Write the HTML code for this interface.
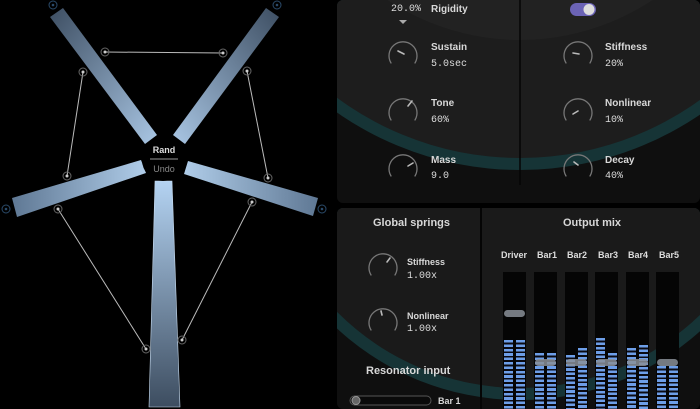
<!DOCTYPE html>
<html><head><style>
*{margin:0;padding:0;box-sizing:border-box}
body{width:700px;height:409px;background:#000;overflow:hidden;position:relative;font-family:"Liberation Sans",sans-serif;color:#ddd}
.abs{position:absolute}
.lbl{position:absolute;font-size:10px;font-weight:bold;color:#d8d8d8}
.val{position:absolute;font-family:"Liberation Mono",monospace;font-size:10px;color:#ddd}
.meter{position:absolute;top:272px;width:23px;height:137px;background:#050505}
.lv{position:absolute;bottom:0;width:9px;background:repeating-linear-gradient(to bottom,#6d9ee8 0 2.6px,#0a0a12 2.6px 4.4px)}
.hd{position:absolute;left:1px;width:21px;height:7px;border-radius:4px;background:#8a8f98;opacity:.85}
.cl{position:absolute;top:250px;font-size:9px;font-weight:bold;color:#ddd}
</style></head><body>
<svg class="abs" style="left:0;top:0" width="700" height="409">
<defs>
<linearGradient id="g1" x1="0" y1="0" x2="1" y2="1"><stop offset="0" stop-color="#3d4e62"/><stop offset="1" stop-color="#a9c6e4"/></linearGradient>
<linearGradient id="g2" x1="1" y1="0" x2="0" y2="1"><stop offset="0" stop-color="#3d4e62"/><stop offset="1" stop-color="#a9c6e4"/></linearGradient>
<linearGradient id="g3" x1="0" y1="0" x2="1" y2="0"><stop offset="0" stop-color="#5f7894"/><stop offset="1" stop-color="#b0cde9"/></linearGradient>
<linearGradient id="g4" x1="1" y1="0" x2="0" y2="0"><stop offset="0" stop-color="#5f7894"/><stop offset="1" stop-color="#b0cde9"/></linearGradient>
<linearGradient id="g5" x1="0" y1="0" x2="0" y2="1"><stop offset="0" stop-color="#b4d3f2"/><stop offset="1" stop-color="#3d4d60"/></linearGradient>
<clipPath id="cp1"><rect x="337" y="0" width="363" height="203" rx="6"/></clipPath>
<clipPath id="cp2"><rect x="337" y="208" width="363" height="201" rx="6"/></clipPath>
</defs>
<!-- right panels -->
<g clip-path="url(#cp1)">
<rect x="337" y="0" width="363" height="203" fill="#0f0f0f"/>
<circle cx="520" cy="-150" r="320" fill="#163436"/>
<circle cx="520" cy="-150" r="308" fill="#1d1d1d"/>
<circle cx="520" cy="-200" r="240" fill="#222"/>
</g>
<line x1="520" y1="0" x2="520" y2="185" stroke="#050505" stroke-width="1.5"/>
<g clip-path="url(#cp2)">
<rect x="337" y="208" width="363" height="201" fill="#0f0f0f"/>
<circle cx="520" cy="130" r="270" fill="#163436"/>
<circle cx="520" cy="130" r="258" fill="#1a1a1a"/>
</g>
<line x1="481" y1="208" x2="481" y2="409" stroke="#050505" stroke-width="2"/>
<!-- bars -->
<polygon points="50,17 63,8 157,135 145,144" fill="url(#g1)"/>
<polygon points="266,8 279,17 185,144 173,135" fill="url(#g2)"/>
<polygon points="12,198 141,160 146,173 17,217" fill="url(#g3)"/>
<polygon points="188,161 318,198 313,216 184,174" fill="url(#g4)"/>
<polygon points="155,181 172,181 180,407 149,407" fill="url(#g5)" stroke="#c8dcf0" stroke-width=".6"/>
<circle cx="163" cy="160" r="21" fill="#000"/>
<line x1="150" y1="159" x2="178" y2="159" stroke="#999" stroke-width="1"/>
<text x="164" y="153" font-size="9" font-weight="bold" fill="#ddd" text-anchor="middle" font-family="Liberation Sans">Rand</text>
<text x="164" y="172" font-size="9" fill="#888" text-anchor="middle" font-family="Liberation Sans">Undo</text>
<g stroke="#bbb" stroke-width="1" fill="none">
<line x1="105" y1="52" x2="223" y2="53"/><line x1="83" y1="72" x2="67" y2="176"/><line x1="247" y1="71" x2="268" y2="178"/><line x1="58" y1="209" x2="146" y2="349"/><line x1="252" y1="202" x2="182" y2="340"/>
</g>
<g stroke="#666" fill="none">
<circle cx="105" cy="52" r="4"/><circle cx="223" cy="53" r="4"/><circle cx="83" cy="72" r="4"/><circle cx="67" cy="176" r="4"/><circle cx="247" cy="71" r="4"/><circle cx="268" cy="178" r="4"/><circle cx="58" cy="209" r="4"/><circle cx="146" cy="349" r="4"/><circle cx="252" cy="202" r="4"/><circle cx="182" cy="340" r="4"/>
</g>
<g fill="#ccc"><circle cx="105" cy="52" r="1.5"/><circle cx="223" cy="53" r="1.5"/><circle cx="83" cy="72" r="1.5"/><circle cx="67" cy="176" r="1.5"/><circle cx="247" cy="71" r="1.5"/><circle cx="268" cy="178" r="1.5"/><circle cx="58" cy="209" r="1.5"/><circle cx="146" cy="349" r="1.5"/><circle cx="252" cy="202" r="1.5"/><circle cx="182" cy="340" r="1.5"/></g>
<g stroke="#2a4a6a" fill="none"><circle cx="53" cy="5" r="4"/><circle cx="277" cy="5" r="4"/><circle cx="6" cy="209" r="4"/><circle cx="322" cy="209" r="4"/></g>
<g fill="#2a4a6a"><circle cx="53" cy="5" r="1.3"/><circle cx="277" cy="5" r="1.3"/><circle cx="6" cy="209" r="1.3"/><circle cx="322" cy="209" r="1.3"/></g>
<!-- knobs -->
<g fill="none" stroke-linecap="round">
<g stroke="#777" stroke-width="1.3">
<path d="M391,63 A14,14 0 1 1 415,63"/><path d="M391,120 A14,14 0 1 1 415,120"/><path d="M391,176 A14,14 0 1 1 415,176"/>
<path d="M566,63 A14,14 0 1 1 590,63"/><path d="M566,120 A14,14 0 1 1 590,120"/><path d="M566,176 A14,14 0 1 1 590,176"/>
<path d="M371,275 A14,14 0 1 1 395,275"/><path d="M371,330 A14,14 0 1 1 395,330"/>
</g>
<g stroke="#bbb" stroke-width="1.6">
<line x1="398" y1="51" x2="404" y2="54"/><line x1="408" y1="106" x2="412" y2="101"/><line x1="408" y1="166" x2="413" y2="163"/>
<line x1="573" y1="53" x2="579" y2="54"/><line x1="573" y1="114" x2="578" y2="111"/><line x1="574" y1="162" x2="578" y2="165"/>
<line x1="387" y1="262" x2="390" y2="258"/><line x1="382" y1="315" x2="381" y2="311"/>
</g>
</g>
<polygon points="399,20 407,20 403,24" fill="#aaa"/>
<rect x="570" y="3" width="26" height="13" rx="6.5" fill="#6b63b5"/>
<circle cx="589" cy="9.5" r="5.5" fill="#ddd"/>
<!-- slider -->
<rect x="350" y="396" width="81" height="9" rx="4.5" fill="#0a0a0a" stroke="#555"/>
<circle cx="356" cy="400.5" r="4" fill="#666" stroke="#999"/>
</svg>
<div class="val" style="left:391px;top:4px">20.0%</div><div class="lbl" style="left:431px;top:4px">Rigidity</div>
<div class="lbl" style="left:431px;top:42px">Sustain</div><div class="val" style="left:431px;top:59px">5.0sec</div>
<div class="lbl" style="left:431px;top:98px">Tone</div><div class="val" style="left:431px;top:115px">60%</div>
<div class="lbl" style="left:431px;top:155px">Mass</div><div class="val" style="left:431px;top:171px">9.0</div>
<div class="lbl" style="left:605px;top:42px">Stiffness</div><div class="val" style="left:605px;top:59px">20%</div>
<div class="lbl" style="left:605px;top:98px">Nonlinear</div><div class="val" style="left:605px;top:115px">10%</div>
<div class="lbl" style="left:605px;top:155px">Decay</div><div class="val" style="left:605px;top:171px">40%</div>
<div class="lbl" style="left:373px;top:217px;font-size:11px">Global springs</div>
<div class="lbl" style="left:407px;top:257px;font-size:9px">Stiffness</div><div class="val" style="left:407px;top:271px">1.00x</div>
<div class="lbl" style="left:407px;top:311px;font-size:9px">Nonlinear</div><div class="val" style="left:407px;top:324px">1.00x</div>
<div class="lbl" style="left:366px;top:365px;font-size:11px">Resonator input</div>
<div class="lbl" style="left:438px;top:396px;font-size:9px">Bar 1</div>
<div class="lbl" style="left:563px;top:217px;font-size:11px">Output mix</div>
<div class="cl" style="left:501px">Driver</div><div class="cl" style="left:537px">Bar1</div><div class="cl" style="left:567px">Bar2</div><div class="cl" style="left:598px">Bar3</div><div class="cl" style="left:628px">Bar4</div><div class="cl" style="left:659px">Bar5</div>
<div class="meter" style="left:503px"><div class="lv" style="left:1px;height:69px"></div><div class="lv" style="left:13px;height:69px"></div><div class="hd" style="top:38px"></div></div>
<div class="meter" style="left:534px"><div class="lv" style="left:1px;height:56px"></div><div class="lv" style="left:13px;height:56px"></div><div class="hd" style="top:87px"></div></div>
<div class="meter" style="left:565px"><div class="lv" style="left:1px;height:54px"></div><div class="lv" style="left:13px;height:61px"></div><div class="hd" style="top:87px"></div></div>
<div class="meter" style="left:595px"><div class="lv" style="left:1px;height:71px"></div><div class="lv" style="left:13px;height:56px"></div><div class="hd" style="top:87px"></div></div>
<div class="meter" style="left:626px"><div class="lv" style="left:1px;height:61px"></div><div class="lv" style="left:13px;height:64px"></div><div class="hd" style="top:87px"></div></div>
<div class="meter" style="left:656px"><div class="lv" style="left:1px;height:43px"></div><div class="lv" style="left:13px;height:43px"></div><div class="hd" style="top:87px"></div></div>
</body></html>
